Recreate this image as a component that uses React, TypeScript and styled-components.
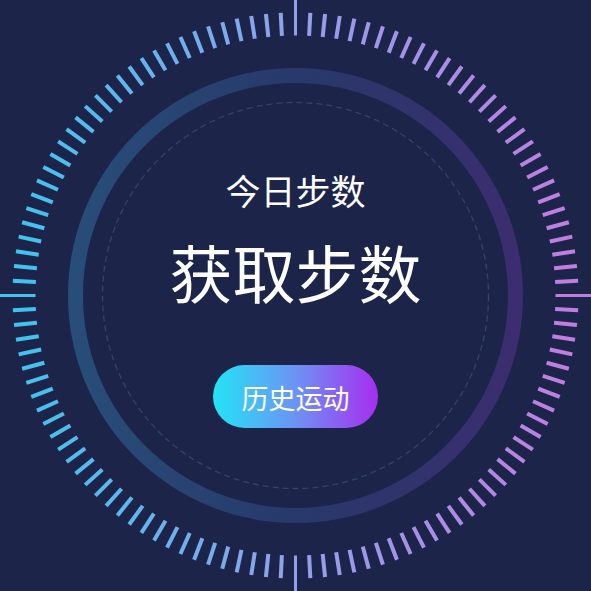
import React from "react";
import styled, { createGlobalStyle } from "styled-components";

const Global = createGlobalStyle`
  html, body { margin: 0; padding: 0; background: #1c2549; }
  body { font-family: "Noto Sans CJK SC", "Noto Sans", sans-serif; }
`;

const Stage = styled.div`
  width: 591px;
  height: 591px;
  display: grid;
  background: #1c2549;
  overflow: hidden;
`;

const Dial = styled.svg`
  grid-area: 1 / 1;
  width: 591px;
  height: 591px;
  display: block;
`;

const Content = styled.div`
  grid-area: 1 / 1;
  display: flex;
  flex-direction: column;
  align-items: center;
  padding-top: 172px;
  color: #ffffff;
  z-index: 1;
`;

const Label = styled.div`
  font-size: 35px;
  line-height: 1;
  font-weight: 400;
`;

const Value = styled.div`
  margin-top: 32px;
  font-size: 63px;
  line-height: 1;
  font-weight: 400;
`;

const HistoryButton = styled.button`
  margin-top: 63px;
  width: 165px;
  height: 63px;
  border: none;
  border-radius: 32px;
  background: linear-gradient(90deg, #22e4f6 0%, #6c93f4 50%, #a62ef0 100%);
  color: #ffffff;
  font-family: "Noto Sans CJK SC", "Noto Sans", sans-serif;
  font-size: 27px;
  line-height: 1;
  padding: 0;
  padding-top: 2px;
  cursor: pointer;
`;

const C = 295.5;

function ticks() {
  const out: React.ReactNode[] = [];
  for (let i = 0; i < 120; i++) {
    const a = (i * 3 * Math.PI) / 180;
    const cardinal = i % 30 === 0;
    const r1 = 260;
    const r2 = cardinal ? 300 : 283;
    const s = Math.sin(a);
    const c = Math.cos(a);
    out.push(
      <line
        key={i}
        x1={C + r1 * s}
        y1={C - r1 * c}
        x2={C + r2 * s}
        y2={C - r2 * c}
        stroke="url(#tickGrad)"
        strokeWidth={cardinal ? 3 : 4}
      />
    );
  }
  return out;
}

export default function App() {
  return (
    <>
      <Global />
      <Stage>
        <Dial viewBox="0 0 591 591">
          <defs>
            <linearGradient id="tickGrad" gradientUnits="userSpaceOnUse" x1="0" y1="0" x2="591" y2="0">
              <stop offset="0" stopColor="#3ac6ef" />
              <stop offset="0.5" stopColor="#92a0ec" />
              <stop offset="1" stopColor="#c47ae0" />
            </linearGradient>
            <linearGradient id="ringGrad" gradientUnits="userSpaceOnUse" x1="75" y1="0" x2="516" y2="0">
              <stop offset="0" stopColor="#284d79" />
              <stop offset="0.5" stopColor="#27396a" />
              <stop offset="1" stopColor="#3b2d6f" />
            </linearGradient>
          </defs>
          {ticks()}
          <circle cx={C} cy={C} r={220} fill="none" stroke="url(#ringGrad)" strokeWidth={15} />
          <circle
            cx={C}
            cy={C}
            r={193}
            fill="none"
            stroke="#304270"
            strokeWidth={1.3}
            strokeDasharray="6 4"
          />
        </Dial>
        <Content>
          <Label>今日步数</Label>
          <Value>获取步数</Value>
          <HistoryButton>历史运动</HistoryButton>
        </Content>
      </Stage>
    </>
  );
}
